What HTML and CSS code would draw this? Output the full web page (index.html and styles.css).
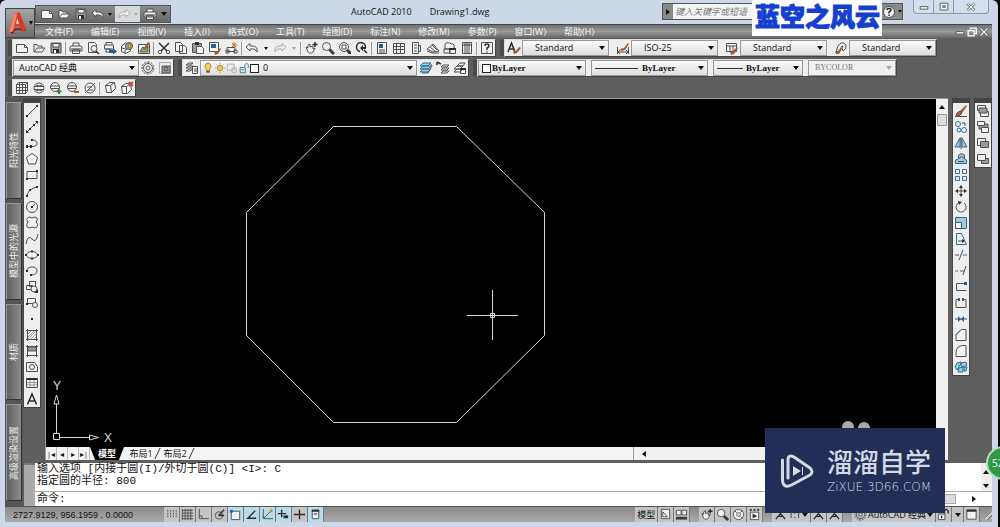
FILE: index.html
```html
<!DOCTYPE html>
<html lang="zh-CN">
<head>
<meta charset="utf-8">
<title>AutoCAD 2010 Drawing1.dwg</title>
<link rel="stylesheet" href="styles.css">
</head>
<body>
<svg class="defs" aria-hidden="true">
  <symbol id="new" viewBox="0 0 14 14"><path class="f" d="M1.500 3.500h8l3 3v5h-11z"/><path d="M9.500 3.500v3h3"/></symbol>
  <symbol id="open" viewBox="0 0 14 14"><path class="f" d="M2 11V3.500h3l1 1.500h4v2M2 11l3-4h8l-3 4z"/></symbol>
  <symbol id="save" viewBox="0 0 14 14"><path class="g" d="M2 2h10v10H2z"/><path class="f" d="M4 2.500h6v3.500H4z"/><path class="k" d="M4 8h6v4H4z"/><path class="w" d="M5 9h2v3H5z"/></symbol>
  <symbol id="print" viewBox="0 0 14 14"><path class="f" d="M4 5V2h6v3M2 5h10l1 1v4H1V6zM3.500 9h7v3.500h-7z"/><path class="k" d="M2 7.500h10v1H2z"/></symbol>
  <symbol id="preview" viewBox="0 0 14 14"><path class="f" d="M2.500 1.500h6l2 2v8h-8z"/><circle class="f" cx="8" cy="7.500" r="3"/><path class="t" d="M10 10l3 3"/></symbol>
  <symbol id="publish" viewBox="0 0 14 14"><path class="f" d="M3 4V1.500h6V4M1.500 4h9v4h-9zM3 8h5v3H3z"/><path class="b" d="M6 9h4V7l4 3.500-4 3V12H6z"/></symbol>
  <symbol id="globe" viewBox="0 0 14 14"><path class="f" d="M1.500 5l4-3 5 2v6l-5 2.500-4-2z"/><circle class="gr" cx="9" cy="5" r="3.500"/><path class="y" d="M8 3l3 1-2 3z"/><path d="M2 7l5 1.500M5 9v3"/></symbol>
  <symbol id="markup" viewBox="0 0 14 14"><path class="f" d="M1.500 3.500h11v9h-11z"/><path class="gr" d="M3 10l3-4 2 2 3-3v6H3z"/><path class="o" d="M6 8l5-7 2 1-5 7z"/></symbol>
  <symbol id="cut" viewBox="0 0 14 14"><path class="t" d="M2 2l8 8M12 2L4 10"/><circle cx="3" cy="11" r="1.700"/><circle cx="11" cy="11" r="1.700"/></symbol>
  <symbol id="copy" viewBox="0 0 14 14"><path class="f" d="M1.500 1.500h5l2 2v7h-7zM5.500 4.500h5l2 2v6h-7z"/></symbol>
  <symbol id="paste" viewBox="0 0 14 14"><path class="g" d="M1.500 2.500h9v9h-9z"/><path class="k" d="M4 1h4v3H4z"/><path class="f" d="M5.500 5.500h5l2 2v5h-7z"/></symbol>
  <symbol id="match" viewBox="0 0 14 14"><path class="f" d="M1.500 1.500h9v9h-9z"/><path class="b" d="M3 3h5v4H3z"/><path class="o" d="M6 10l3 1 3-4 1 1-3 5-3 1z"/></symbol>
  <symbol id="block" viewBox="0 0 14 14"><path class="f" d="M2 10.500V6.500h8v4zM1 9h3v3H1zM9 9h3v3H9z"/><path class="os" d="M9 1v5M7 4h5M7 2l4 4M11 2L7 6"/></symbol>
  <symbol id="undo" viewBox="0 0 14 14"><path class="f" d="M1 6l4-3.500V5c5-.5 8 1.500 7 6-1-2.500-3-3.500-7-3v2z"/></symbol>
  <symbol id="redo" viewBox="0 0 14 14"><path class="l" d="M13 6L9 2.500V5C4 4.500 1 6.500 2 11c1-2.500 3-3.500 7-3v2z"/></symbol>
  <symbol id="pan" viewBox="0 0 14 14"><path class="f" d="M2 6l2 1V4l2-1v3l3-1v3l2-1-2 4c-2 2-4 1-5 0z"/><path class="t" d="M11 1v5M8.500 3.500h5"/></symbol>
  <symbol id="zoom" viewBox="0 0 14 14"><circle class="f" cx="5.500" cy="5.500" r="4"/><path class="tt" d="M8.500 8.500L13 13"/></symbol>
  <symbol id="zoomw" viewBox="0 0 14 14"><circle class="f" cx="6" cy="6" r="4.500"/><path d="M4 4h4v4H4z"/><path class="tt" d="M9 9l3 3"/><path class="k" d="M13 10v3h-3z"/></symbol>
  <symbol id="zoomp" viewBox="0 0 14 14"><path class="t" d="M5 10.500a4.500 4.500 0 1 1 5.500-4M9 9l3 3"/><path class="k" d="M5 7l3-3v2h3v2H8v2z"/></symbol>
  <symbol id="props" viewBox="0 0 14 14"><path class="f" d="M2.500 1.500h9v11h-9z"/><path class="b" d="M4 3h4v4H4z"/><path d="M4 9h6M4 11h6"/></symbol>
  <symbol id="design" viewBox="0 0 14 14"><path class="f" d="M1.500 2.500h11v10h-11z"/><path d="M4.500 3v9M8.500 3v9M2 5.500h10M2 8.500h10"/></symbol>
  <symbol id="palette" viewBox="0 0 14 14"><path class="f" d="M3.500 1.500h6v11h-6zM9.500 4.500h2v6h-2z"/><path d="M5 4h3M5 7h3M5 10h3"/></symbol>
  <symbol id="sheet" viewBox="0 0 14 14"><path class="f" d="M1 8l6-5 6 7-6 1z"/><path d="M1 10l5 2h7M4 6l5 4M6 4l5 5"/></symbol>
  <symbol id="redline" viewBox="0 0 14 14"><path class="f" d="M2 3q1-2 3-1 2-1 3 1 2-1 3 1v4H2zM1 8h6v4H1zM6.500 7.500h6v5h-6z"/><path class="k" d="M6 7h7v2H6z"/></symbol>
  <symbol id="calc" viewBox="0 0 14 14"><path class="f" d="M2.500 1.500h9v11h-9z"/><path class="g" d="M4 3h6v2H4z"/><path d="M4 7h6M4 9h6M4 11h6"/></symbol>
  <symbol id="help" viewBox="0 0 14 14"><path class="f" d="M1.500 1.500h11v11h-11z"/><path class="t" d="M5 5q0-2 2-2t2 2q0 1-2 2v2M7 10.500v1"/></symbol>
  <symbol id="qhelp" viewBox="0 0 14 14"><circle class="f" cx="7" cy="7" r="5.500"/><path class="t" d="M5 5q0-1.500 2-1.500t2 1.500q0 1-2 2v1.500M7 9.500v1.500"/></symbol>
  <symbol id="tstyle" viewBox="0 0 14 14"><path class="t" d="M1 11L4.500 2 8 11M2.500 8h4"/><path class="o" d="M6 10l3 0 3-4 2 1-4 5-3 1z"/></symbol>
  <symbol id="dstyle" viewBox="0 0 14 14"><path d="M1.500 6v7M12.500 6v7M2 11h10M4 9l-2 2 2 2M10 9l2 2-2 2"/><path class="o" d="M4 8l4-1 4-5 1 1-4 6-4 1z"/></symbol>
  <symbol id="tbstyle" viewBox="0 0 14 14"><path class="f" d="M1.500 2.500h10v8h-10z"/><path d="M1.500 5h10M5 5v5M8 5v5"/><path class="o" d="M5 11l3-1 4-4 1 1-4 6-3 1z"/></symbol>
  <symbol id="mlstyle" viewBox="0 0 14 14"><path class="f" d="M2 11L4 5q4-6 8-1 1 4-3 6L8 7q2-3 0-2l-3 5z"/><path class="o" d="M1 11l3 0 3-4 1 1-3 5H2z"/></symbol>
  <symbol id="gear" viewBox="0 0 14 14"><circle cx="7" cy="7" r="4.500"/><circle cx="7" cy="7" r="2"/><path class="dash" d="M7 1a6 6 0 1 1-.1 0"/></symbol>
  <symbol id="wsave" viewBox="0 0 14 14"><path class="l" d="M1.500 1.500h11v11h-11z"/><path class="g" d="M4 5h8v7H4z"/><circle cx="8" cy="8" r="2"/></symbol>
  <symbol id="layers" viewBox="0 0 14 14"><path class="f" d="M1 4l3-2h4L5 4zM1 7l3-2h4L5 7zM1 10l3-2h4l-3 2zM7.500 5.500h5v7h-5z"/><path d="M9 8h3M9 10h3"/></symbol>
  <symbol id="bulb" viewBox="0 0 14 14"><path class="y" d="M7 1a4 4 0 0 1 2 7v2H5V8a4 4 0 0 1 2-7z"/><path class="t" d="M5 11.500h4"/></symbol>
  <symbol id="sun" viewBox="0 0 14 14"><circle class="y" cx="7" cy="7" r="3"/><path class="os" d="M7 1v2M7 11v2M1 7h2M11 7h2M3 3l1 1M10 10l1 1M3 11l1-1M10 4l1-1"/></symbol>
  <symbol id="vp" viewBox="0 0 14 14"><path class="l" d="M1.500 2.500h8v7h-8zM7 7h5v5H7z"/></symbol>
  <symbol id="lock" viewBox="0 0 14 14"><path class="bs" d="M2.500 6.500h6v6h-6zM8 6V3q2-3 4 0v4M4 9h3"/></symbol>
  <symbol id="lay1" viewBox="0 0 14 14"><path class="c" d="M1 11l3-3h8l-3 3zM1 8l3-3h8L9 8zM1 5l3-3h8L9 5z"/><path d="M12 3l1 2-4 7H3"/></symbol>
  <symbol id="lay2" viewBox="0 0 14 14"><path class="f" d="M5 12l2-2h6l-2 2zM5 9l2-2h6l-2 2zM5 6l2-2h6l-2 2z"/><path class="t" d="M1 1l4 2M1 1v3"/></symbol>
  <symbol id="lay3" viewBox="0 0 14 14"><path class="f" d="M1 11l3-3h6l-3 3zM1 8l3-3h6L7 8zM4 5l3-3h5l-2 3zM7.500 7.500h5v5h-5z"/><path class="k" d="M7 7h6v2H7z"/></symbol>
  <symbol id="mesh" viewBox="0 0 14 14"><path class="f" d="M1.500 3.500l2-2h9v9l-2 2h-9z"/><path d="M1.500 3.500h9v9M10.500 3.500l2-2M4.500 2v10M7.500 2v10M2 6.500h10M2 9.500h10"/></symbol>
  <symbol id="sphere" viewBox="0 0 14 14"><circle class="f" cx="7" cy="7" r="5"/><path d="M2 5.500h10M2 8.500h10M4 4q3 2 6 0M4 10q3-2 6 0"/></symbol>
  <symbol id="plus" viewBox="0 0 14 14"><circle class="f" cx="6" cy="6" r="4.500"/><path d="M2 5h8M2 7.500h8"/><path class="grs" d="M10 8v5M7.500 10.500h5"/></symbol>
  <symbol id="minus" viewBox="0 0 14 14"><circle class="f" cx="6" cy="6" r="4.500"/><path d="M2 5h8M2 7.500h8"/><path class="rs" d="M8 11h5"/></symbol>
  <symbol id="slash" viewBox="0 0 14 14"><circle class="f" cx="7" cy="7" r="5"/><path d="M2 12L12 2M4 6h5M5 9h5"/></symbol>
  <symbol id="cube" viewBox="0 0 14 14"><path class="f" d="M2.500 4.500l4-3h5l1 6-4 4h-5z"/><path d="M2.500 4.500h5l4-3M7.500 4.500l1 7"/></symbol>
  <symbol id="cubex" viewBox="0 0 14 14"><path class="f" d="M1.500 5.500l4-3h5l1 6-4 4h-5z"/><path d="M1.500 5.500h5v7M6.500 5.500l4-3"/><path class="rs" d="M9 1l4 4M13 1L9 5"/></symbol>

  <symbol id="line" viewBox="0 0 14 14"><path d="M2 12L12 2"/><path class="k" d="M1 11h2v2H1zM11 1h2v2h-2z"/></symbol>
  <symbol id="xline" viewBox="0 0 14 14"><path d="M1 13L13 1"/><path class="k" d="M1 10v3h3zM10 1h3v3zM4 8h2v2H4zM8 4h2v2H8z"/></symbol>
  <symbol id="pline" viewBox="0 0 14 14"><path d="M2 10.500h7q4-1 3-4t-5-2.500"/><path class="k" d="M1 9h2v3H1zM5 9h2v3H5zM6 3h2v2H6z"/></symbol>
  <symbol id="poly" viewBox="0 0 14 14"><path class="f" d="M7 1.500l5.500 4-2 6.500h-7l-2-6.500z"/></symbol>
  <symbol id="rect" viewBox="0 0 14 14"><path class="f" d="M2 3.500h10v7H2z"/><path class="k" d="M1 10h2v2H1zM11 2h2v2h-2z"/></symbol>
  <symbol id="arc" viewBox="0 0 14 14"><path d="M2 12Q3 5 12 3"/><path class="k" d="M1 11h2v2H1zM4 5h2v2H4zM11 2h2v2h-2z"/></symbol>
  <symbol id="circle" viewBox="0 0 14 14"><circle class="f" cx="7" cy="7" r="5.500"/><path d="M7 7l3-3"/><path class="k" d="M6 6h2v2H6z"/></symbol>
  <symbol id="cloud" viewBox="0 0 14 14"><path class="f" d="M3 6q-3-3 0-4.500 2-1 4 .5 3-2 5 0 1 2-1 4 3 2 1 5-2 2-5 0-3 2-5 0-1-3 1-5z"/></symbol>
  <symbol id="spline" viewBox="0 0 14 14"><path d="M1 12Q3 2 7 7t6-5"/></symbol>
  <symbol id="ellipse" viewBox="0 0 14 14"><ellipse class="f" cx="7" cy="7" rx="5.500" ry="3.500"/><path class="k" d="M6 2.500h2v2H6zM6 9.500h2v2H6zM0 6h2v2H0zM12 6h2v2h-2z"/></symbol>
  <symbol id="earc" viewBox="0 0 14 14"><path d="M2 7q0-4 5-4t5 4-6 4"/><path class="k" d="M1 6h2v2H1zM5 10h2v2H5z"/></symbol>
  <symbol id="insert" viewBox="0 0 14 14"><path class="f" d="M4.500 1.500h6v5h-6zM1.500 5.500h6v4h-6z"/><circle class="f" cx="9" cy="9" r="3"/><path class="k" d="M13 9v4H9z"/></symbol>
  <symbol id="mkblock" viewBox="0 0 14 14"><path class="f" d="M2.500 2.500h8v5h-8z"/><circle class="f" cx="10" cy="9" r="2.500"/><path class="k" d="M1 7h2v2H1z"/></symbol>
  <symbol id="point" viewBox="0 0 14 14"><path class="k" d="M6 6h2v2H6z"/></symbol>
  <symbol id="hatch" viewBox="0 0 14 14"><path class="f" d="M2.500 2.500h9v9h-9z"/><path d="M2.500 1v12M11.500 1v12M1 2.500h12M1 11.500h12"/><path class="thin" d="M3 6l3-3M3 9l6-6M3 11l8-8M6 11l5-5M9 11l2-2"/></symbol>
  <symbol id="grad" viewBox="0 0 14 14"><path class="f" d="M2.500 2.500h9v9h-9z"/><path class="g" d="M3 3h8v4H3z"/><path d="M2.500 1v12M11.500 1v12M1 2.500h12M1 11.500h12"/></symbol>
  <symbol id="region" viewBox="0 0 14 14"><path class="f" d="M1.500 2.500h8l3 4v5h-11z"/><circle class="f" cx="7" cy="7" r="2.500"/></symbol>
  <symbol id="table" viewBox="0 0 14 14"><path class="f" d="M1.500 2.500h11v9h-11z"/><path class="k" d="M1.500 2h11v2h-11z"/><path class="thin" d="M5 4v7M9 4v7M2 6.500h10M2 9h10"/></symbol>
  <symbol id="mtext" viewBox="0 0 14 14"><path class="t" d="M2.500 12.500L7 2l4.500 10.500M4 9h6"/></symbol>

  <symbol id="erase" viewBox="0 0 14 14"><path class="o" d="M5 8l7-7 1 1-5 7z"/><path class="r" d="M3 9l3-2 2 2-3 3H2z"/><path d="M1 12.500h12"/></symbol>
  <symbol id="mcopy" viewBox="0 0 14 14"><circle class="bs" cx="4" cy="4" r="2.500"/><circle class="bs" cx="5" cy="10" r="2"/><circle class="bs" cx="10" cy="10" r="2.500"/><path d="M8 3h3v3"/></symbol>
  <symbol id="mirror" viewBox="0 0 14 14"><path class="c" d="M6 2v9H1zM8 2v9h5z"/><path d="M7 1v12"/></symbol>
  <symbol id="offset" viewBox="0 0 14 14"><path class="c" d="M1.500 11.500V8l3-1V3q3-3 6 0v4l2 1v3.500z"/><path class="f" d="M4 9.500h6M6 7V5h3v2"/></symbol>
  <symbol id="array" viewBox="0 0 14 14"><path class="bs" d="M1.500 1.500h4v4h-4zM8.500 1.500h4v4h-4zM1.500 8.500h4v4h-4zM8.500 8.500h4v4h-4z"/></symbol>
  <symbol id="move" viewBox="0 0 14 14"><path d="M7 3v8M3 7h8"/><path class="k" d="M7 1l2 3H5zM7 13l2-3H5zM1 7l3-2v4zM13 7l-3-2v4z"/></symbol>
  <symbol id="rotate" viewBox="0 0 14 14"><path d="M5 2.500a5 5 0 1 0 5 .5"/><path class="k" d="M4 1l4 1-3 3z"/></symbol>
  <symbol id="scale" viewBox="0 0 14 14"><path class="c" d="M1.500 1.500h11v11h-11z"/><path class="f" d="M1.500 6.500h6v6h-6z"/></symbol>
  <symbol id="stretch" viewBox="0 0 14 14"><path class="bs" d="M2.500 1.500h5l5 11h-10z"/><path d="M4 9h5"/><path class="k" d="M8 7l3 2-3 2z"/></symbol>
  <symbol id="trim" viewBox="0 0 14 14"><path d="M5 12l4-10M1 7h4"/><path class="bs" d="M9 7h4"/></symbol>
  <symbol id="extend" viewBox="0 0 14 14"><path d="M9 11l3-9"/><path class="bs" d="M1 7h3M6 7h4"/></symbol>
  <symbol id="break1" viewBox="0 0 14 14"><path d="M11 3.500H2.500v7h10"/><path class="b" d="M10 2h3v3h-3z"/></symbol>
  <symbol id="break2" viewBox="0 0 14 14"><path d="M4 3.500H2v8h10v-8h-2"/><path class="b" d="M4 2h2v3H4zM8 2h2v3H8z"/></symbol>
  <symbol id="join" viewBox="0 0 14 14"><path d="M1 7h12"/><path class="b" d="M4 4l3 3-3 3zM10 4L7 7l3 3z"/></symbol>
  <symbol id="chamfer" viewBox="0 0 14 14"><path class="f" d="M2 12.500V6.500l5-5h5v11z"/><path class="bs" d="M2 7l5-5"/></symbol>
  <symbol id="fillet" viewBox="0 0 14 14"><path class="f" d="M2 12.500V9q0-7 7-7.500h3v11z"/></symbol>
  <symbol id="explode" viewBox="0 0 14 14"><path class="c" d="M1 7l2-4 4-1-1 3-3 5zM7 3l5-1 1 3-3 2-3-1zM5 8l4-1v5H4zM10 7l3 0-1 4-2 0z"/></symbol>
  <symbol id="front" viewBox="0 0 14 14"><path class="f" d="M1.500 1.500h8v5h-8zM4.500 7.500h8v5h-8z"/><path class="g" d="M3 4h8v5H3z"/></symbol>
  <symbol id="back" viewBox="0 0 14 14"><path class="g" d="M3 4h9v5H3z"/><path class="f" d="M1.500 1.500h7v4h-7zM5.500 7.500h7v5h-7z"/></symbol>
  <symbol id="above" viewBox="0 0 14 14"><path class="f" d="M1.500 2.500h8v7h-8z"/><path class="g" d="M4.500 5.500h8v6h-8z"/></symbol>
  <symbol id="under" viewBox="0 0 14 14"><path class="g" d="M5.500 6.500h7v5h-7z"/><path class="f" d="M1.500 2.500h8v6h-8z"/></symbol>

  <symbol id="snap" viewBox="0 0 14 14"><path class="dash" d="M3 2v9M6 2v9M9 2v9M12 2v9"/></symbol>
  <symbol id="grid" viewBox="0 0 14 14"><path d="M1.500 1v12M4.500 1v12M7.500 1v12M10.500 1v12M1 2.500h12M1 5.500h12M1 8.500h12M1 11.500h12"/></symbol>
  <symbol id="ortho" viewBox="0 0 14 14"><path d="M2.500 1v10.500H13M2.500 8.500h3v3"/></symbol>
  <symbol id="polar" viewBox="0 0 14 14"><circle cx="6.500" cy="8" r="4"/><path class="t" d="M6 8l6-6M6 8h6"/></symbol>
  <symbol id="osnap" viewBox="0 0 14 14"><path class="f" d="M2.500 3.500h9v9h-9z"/><path class="b" d="M1 2h3v3H1z"/></symbol>
  <symbol id="otrack" viewBox="0 0 14 14"><path class="t" d="M11 3L3 11h9"/></symbol>
  <symbol id="ducs" viewBox="0 0 14 14"><path d="M2.500 1v10.500H13M3 11l8-8M2 9l2 2"/><path class="os" d="M11 1v4M9 3h4"/></symbol>
  <symbol id="dyn" viewBox="0 0 14 14"><path class="t" d="M5 2v8M1 6h9"/><path class="k" d="M7 8h5v3H7z"/></symbol>
  <symbol id="lwt" viewBox="0 0 14 14"><path class="t" d="M7 2v10M1 7h12"/></symbol>
  <symbol id="qp" viewBox="0 0 14 14"><path class="f" d="M3.500 2.500h7v9h-7z"/><path class="k" d="M3 2h8v2H3zM5 6h4v1H5z"/></symbol>
  <symbol id="layout" viewBox="0 0 14 14"><path class="f" d="M2.500 1.500h9v10h-9z"/><path d="M4 9.500V4l5 5.500z"/></symbol>
  <symbol id="views" viewBox="0 0 14 14"><path class="f" d="M1.500 2.500h5v5h-5zM7.500 2.500h5v5h-5z"/><path class="tt" d="M1 11h12"/></symbol>
  <symbol id="wheel" viewBox="0 0 14 14"><circle class="f" cx="7" cy="7" r="5.500"/><circle cx="7" cy="7" r="2"/><path d="M3 3l2 2M9 9l2 2M11 3L9 5"/></symbol>
  <symbol id="motion" viewBox="0 0 14 14"><path class="f" d="M2.500 4.500h9v8h-9z"/><path class="k" d="M2 1h2v2H2zM6 1h2v2H6zM10 1h2v2h-2zM5 6l5 3-5 2z"/></symbol>
  <symbol id="scalep" viewBox="0 0 14 14"><path class="t" d="M7 1v5M2 12l5-6 5 6M4 9h6"/></symbol>
  <symbol id="plock" viewBox="0 0 14 14"><path class="f" d="M1.500 6.500h7v6h-7z"/><path class="t" d="M8 6V3q2-3 4 0v3M5 8v3"/></symbol>
  <symbol id="clean" viewBox="0 0 14 14"><path class="f" d="M2 2h10v10H2z"/><path class="k" d="M2 2h10v2H2z"/></symbol>
  <symbol id="min" viewBox="0 0 14 14"><path class="f" d="M2.500 6.500h9v3h-9z"/></symbol>
  <symbol id="max" viewBox="0 0 14 14"><path class="f" d="M2.500 2.500h9v8h-9zM5.500 5.500h3v2h-3z"/></symbol>
  <symbol id="restore" viewBox="0 0 14 14"><path class="ws" d="M5 4V2.500h7V9h-2M2.500 5.500h7v6h-7z"/></symbol>
  <symbol id="close" viewBox="0 0 14 14"><path class="tt" d="M3 3l8 8M11 3l-8 8"/><path class="ws" d="M3 3l8 8M11 3l-8 8"/></symbol>
</svg>

<div class="window">
  <header class="head">
    <button class="app" aria-label="应用程序菜单">
      <svg viewBox="0 0 24 28" width="22" height="26"><path fill="#8b1710" d="M2 25l3-4 14-1 3 3-5 1-3-2-6 1-2 4z"/><path fill="#d93b22" d="M8 2l6-1 8 21-5 2-3-6H9l-3 6-5 2z"/><path fill="#f6836a" d="M8 2l3 1L6 24l-5 2z"/><path fill="#fff" d="M11 8l2 7h-3z"/></svg>
      <i class="caret"></i>
    </button>
    <div class="bars">
      <div class="title">
        <div class="quick">
          <button aria-label="新建"><svg><use href="#new"/></svg></button><button aria-label="打开"><svg><use href="#open"/></svg></button><button aria-label="保存"><svg><use href="#save"/></svg></button><button aria-label="放弃"><svg><use href="#undo"/></svg></button><button class="drop" aria-label="放弃列表"><i class="caret"></i></button><span class="off"><button aria-label="重做" disabled><svg><use href="#redo"/></svg></button><button class="drop" aria-label="重做列表" disabled><i class="caret"></i></button></span><button aria-label="打印"><svg><use href="#print"/></svg></button><button class="drop wider" aria-label="自定义"><i class="caret"></i></button>
        </div>
        <h1><span>AutoCAD 2010</span><span>Drawing1.dwg</span></h1>
        <div class="find"><i class="right"></i><input type="text" placeholder="键入关键字或短语" aria-label="键入关键字或短语"><button aria-label="帮助"><svg><use href="#qhelp"/></svg></button><i class="caret"></i></div>
        <div class="winbtns"><button aria-label="最小化"><svg><use href="#min"/></svg></button><button aria-label="最大化"><svg><use href="#max"/></svg></button><button class="wide" aria-label="关闭"><svg><use href="#close"/></svg></button></div>
      </div>
      <nav class="menu">
        <button>文件(F)</button><button>编辑(E)</button><button>视图(V)</button><button>插入(I)</button><button>格式(O)</button><button>工具(T)</button><button>绘图(D)</button><button>标注(N)</button><button>修改(M)</button><button>参数(P)</button><button>窗口(W)</button><button>帮助(H)</button>
        <div class="docbtns"><button aria-label="最小化文档"><svg><use href="#min"/></svg></button><button aria-label="还原文档"><svg><use href="#restore"/></svg></button><button aria-label="关闭文档"><svg><use href="#close"/></svg></button></div>
      </nav>
    </div>
  </header>

  <div class="row">
    <div class="bar">
      <button aria-label="新建"><svg><use href="#new"/></svg></button><button aria-label="打开"><svg><use href="#open"/></svg></button><button aria-label="保存"><svg><use href="#save"/></svg></button><hr>
      <button aria-label="打印"><svg><use href="#print"/></svg></button><button aria-label="打印预览"><svg><use href="#preview"/></svg></button><button aria-label="发布"><svg><use href="#publish"/></svg></button><button aria-label="三维 DWF"><svg><use href="#globe"/></svg></button><button aria-label="标记"><svg><use href="#markup"/></svg></button><hr>
      <button aria-label="剪切"><svg><use href="#cut"/></svg></button><button aria-label="复制"><svg><use href="#copy"/></svg></button><button aria-label="粘贴"><svg><use href="#paste"/></svg></button><button aria-label="特性匹配"><svg><use href="#match"/></svg></button><button aria-label="块编辑器"><svg><use href="#block"/></svg></button><hr>
      <button aria-label="放弃"><svg><use href="#undo"/></svg></button><button class="drop" aria-label="放弃列表"><i class="caret"></i></button><button aria-label="重做" disabled><svg><use href="#redo"/></svg></button><button class="drop" aria-label="重做列表" disabled><i class="caret pale"></i></button><hr>
      <button aria-label="平移"><svg><use href="#pan"/></svg></button><button aria-label="缩放"><svg><use href="#zoom"/></svg></button><button aria-label="窗口缩放"><svg><use href="#zoomw"/></svg></button><button aria-label="上一个"><svg><use href="#zoomp"/></svg></button><hr>
      <button aria-label="特性"><svg><use href="#props"/></svg></button><button aria-label="设计中心"><svg><use href="#design"/></svg></button><button aria-label="工具选项板"><svg><use href="#palette"/></svg></button><button aria-label="图纸集"><svg><use href="#sheet"/></svg></button><button aria-label="标记集"><svg><use href="#redline"/></svg></button><button aria-label="计算器"><svg><use href="#calc"/></svg></button><hr>
      <button aria-label="帮助"><svg><use href="#help"/></svg></button>
    </div>
    <div class="bar styles">
      <button aria-label="文字样式"><svg><use href="#tstyle"/></svg></button><label class="combo"><select aria-label="文字样式"><option>Standard</option></select></label>
      <button aria-label="标注样式"><svg><use href="#dstyle"/></svg></button><label class="combo"><select aria-label="标注样式"><option>ISO-25</option></select></label>
      <button aria-label="表格样式"><svg><use href="#tbstyle"/></svg></button><label class="combo"><select aria-label="表格样式"><option>Standard</option></select></label>
      <button aria-label="多重引线样式"><svg><use href="#mlstyle"/></svg></button><label class="combo"><select aria-label="多重引线样式"><option>Standard</option></select></label>
    </div>
  </div>

  <div class="row">
    <div class="bar"><label class="combo space"><select aria-label="工作空间"><option>AutoCAD 经典</option></select></label><button aria-label="工作空间设置"><svg><use href="#gear"/></svg></button><button aria-label="保存工作空间"><svg><use href="#wsave"/></svg></button></div>
    <div class="bar"><button aria-label="图层特性"><svg><use href="#layers"/></svg></button><label class="combo layer"><span class="marks"><svg><use href="#bulb"/></svg><svg><use href="#sun"/></svg><svg><use href="#vp"/></svg><svg><use href="#lock"/></svg><i class="swatch"></i></span><select aria-label="图层"><option>0</option></select></label><button aria-label="置为当前"><svg><use href="#lay1"/></svg></button><button aria-label="上一个图层"><svg><use href="#lay2"/></svg></button><button aria-label="图层状态"><svg><use href="#lay3"/></svg></button></div>
    <div class="bar by"><label class="combo color"><span class="marks"><i class="swatch"></i></span><select aria-label="颜色"><option>ByLayer</option></select></label><label class="combo ltype"><span class="marks"><i class="rule"></i></span><select aria-label="线型"><option>ByLayer</option></select></label><label class="combo lweight"><span class="marks"><i class="rule"></i></span><select aria-label="线宽"><option>ByLayer</option></select></label><label class="combo plot"><select aria-label="打印样式" disabled><option>BYCOLOR</option></select></label></div>
  </div>

  <div class="row">
    <div class="bar"><button aria-label="网格长方体"><svg><use href="#mesh"/></svg></button><button aria-label="平滑对象"><svg><use href="#sphere"/></svg></button><button aria-label="提高平滑度"><svg><use href="#plus"/></svg></button><button aria-label="降低平滑度"><svg><use href="#minus"/></svg></button><button aria-label="优化网格"><svg><use href="#slash"/></svg></button><hr><button aria-label="锐化"><svg><use href="#cube"/></svg></button><button aria-label="取消锐化"><svg><use href="#cubex"/></svg></button></div>
  </div>

  <main class="body">
    <aside class="palettes"><button><span>阳光特性</span></button><button><span>模型中的光源</span></button><button><span>材质</span></button><button><span>高级渲染设置</span></button></aside>
    <div class="center">
      <div class="work">
        <div class="vbar"><button aria-label="直线"><svg><use href="#line"/></svg></button><button aria-label="构造线"><svg><use href="#xline"/></svg></button><button aria-label="多段线"><svg><use href="#pline"/></svg></button><button aria-label="正多边形"><svg><use href="#poly"/></svg></button><button aria-label="矩形"><svg><use href="#rect"/></svg></button><button aria-label="圆弧"><svg><use href="#arc"/></svg></button><button aria-label="圆"><svg><use href="#circle"/></svg></button><button aria-label="修订云线"><svg><use href="#cloud"/></svg></button><button aria-label="样条曲线"><svg><use href="#spline"/></svg></button><button aria-label="椭圆"><svg><use href="#ellipse"/></svg></button><button aria-label="椭圆弧"><svg><use href="#earc"/></svg></button><button aria-label="插入块"><svg><use href="#insert"/></svg></button><button aria-label="创建块"><svg><use href="#mkblock"/></svg></button><button aria-label="点"><svg><use href="#point"/></svg></button><button aria-label="图案填充"><svg><use href="#hatch"/></svg></button><button aria-label="渐变色"><svg><use href="#grad"/></svg></button><button aria-label="面域"><svg><use href="#region"/></svg></button><button aria-label="表格"><svg><use href="#table"/></svg></button><button aria-label="多行文字"><svg><use href="#mtext"/></svg></button></div>
        <section class="view">
          <div class="stage">
            <svg class="drawing" width="889" height="348" role="img" aria-label="正八边形">
              <path class="shape" d="M287.500 27.500h123l88 86v123l-88 87h-123l-87-87v-123z"/>
              <path class="cross" d="M421 216.500h51M446.500 191v50"/><path class="pick" d="M444.500 214.500h4v4h-4z"/>
              <path class="ucs" d="M7.500 334.500h6v6h-6zM14 338.500h29M10.500 334v-29M43.500 336v5l9-2.500zM8 305h5l-2.500-9z"/>
              <text x="7" y="291">Y</text><text x="58" y="343">X</text>
              <circle cx="802" cy="328" r="6"/><circle cx="818" cy="329" r="6"/>
            </svg>
            <div class="vscroll"><i class="up"></i><i class="thumb"></i></div>
          </div>
          <div class="sheets">
            <div class="steps"><button aria-label="第一个">|◂</button><button aria-label="上一个">◂</button><button aria-label="下一个">▸</button><button aria-label="最后">▸|</button></div>
            <button class="tab active">模型</button><button class="tab">布局1</button><button class="tab">布局2</button>
            <div class="hscroll"><i class="left"></i></div>
          </div>
        </section>
        <div class="vbar"><button aria-label="删除"><svg><use href="#erase"/></svg></button><button aria-label="复制"><svg><use href="#mcopy"/></svg></button><button aria-label="镜像"><svg><use href="#mirror"/></svg></button><button aria-label="偏移"><svg><use href="#offset"/></svg></button><button aria-label="阵列"><svg><use href="#array"/></svg></button><button aria-label="移动"><svg><use href="#move"/></svg></button><button aria-label="旋转"><svg><use href="#rotate"/></svg></button><button aria-label="缩放"><svg><use href="#scale"/></svg></button><button aria-label="拉伸"><svg><use href="#stretch"/></svg></button><button aria-label="修剪"><svg><use href="#trim"/></svg></button><button aria-label="延伸"><svg><use href="#extend"/></svg></button><button aria-label="打断于点"><svg><use href="#break1"/></svg></button><button aria-label="打断"><svg><use href="#break2"/></svg></button><button aria-label="合并"><svg><use href="#join"/></svg></button><button aria-label="倒角"><svg><use href="#chamfer"/></svg></button><button aria-label="圆角"><svg><use href="#fillet"/></svg></button><button aria-label="分解"><svg><use href="#explode"/></svg></button></div>
        <div class="vbar last"><button aria-label="前置"><svg><use href="#front"/></svg></button><button aria-label="后置"><svg><use href="#back"/></svg></button><button aria-label="置于对象之上"><svg><use href="#above"/></svg></button><button aria-label="置于对象之下"><svg><use href="#under"/></svg></button></div>
      </div>
      <section class="command">
        <i class="grip"></i>
        <div class="console">
          <div class="log"><p>输入选项 [内接于圆(I)/外切于圆(C)] &lt;I&gt;: C</p><p>指定圆的半径: 800</p><span class="updown"><i class="up"></i><i class="caret"></i></span></div>
          <div class="prompt"><label for="cmd">命令:</label><input id="cmd" type="text"><i class="hthumb"></i><i class="right"></i></div>
        </div>
      </section>
    </div>
  </main>

  <footer class="status">
    <output class="coords">2727.9129, 956.1959 , 0.0000</output>
    <div class="group"><button aria-label="捕捉"><svg><use href="#snap"/></svg></button><button aria-label="栅格"><svg><use href="#grid"/></svg></button><button aria-label="正交"><svg><use href="#ortho"/></svg></button><button aria-label="极轴"><svg><use href="#polar"/></svg></button><button class="on" aria-label="对象捕捉"><svg><use href="#osnap"/></svg></button><button class="on" aria-label="对象追踪"><svg><use href="#otrack"/></svg></button><button class="on" aria-label="动态 UCS"><svg><use href="#ducs"/></svg></button><button class="on" aria-label="动态输入"><svg><use href="#dyn"/></svg></button><button aria-label="线宽"><svg><use href="#lwt"/></svg></button><button class="on" aria-label="快捷特性"><svg><use href="#qp"/></svg></button></div>
    <div class="group tail"><button class="word">模型</button><button aria-label="快速查看布局"><svg><use href="#layout"/></svg></button><button aria-label="快速查看图形"><svg><use href="#views"/></svg></button></div>
    <div class="group"><button aria-label="平移"><svg><use href="#pan"/></svg></button><button aria-label="缩放"><svg><use href="#zoom"/></svg></button><button aria-label="控制盘"><svg><use href="#wheel"/></svg></button><button aria-label="运动"><svg><use href="#motion"/></svg></button></div>
    <div class="group"><button class="word"><svg><use href="#scalep"/></svg>1:1 <i class="caret"></i></button><button aria-label="注释可见性"><svg><use href="#scalep"/></svg></button><button aria-label="自动缩放"><svg><use href="#scalep"/></svg></button></div>
    <div class="group"><button class="word"><svg><use href="#gear"/></svg>AutoCAD 经典 <i class="caret"></i></button><button aria-label="锁定"><svg><use href="#plock"/></svg></button><button class="drop" aria-label="状态栏菜单"><i class="caret"></i></button><button aria-label="全屏显示"><svg><use href="#clean"/></svg></button></div>
    <i class="sizer"></i>
  </footer>

  <div class="author">蓝空之风云</div>
  <div class="brand">
    <svg viewBox="0 0 36 38" width="36" height="38"><path d="M3.500 8v19q0 10 9 6L31 23q4-3 0-7L15 5q-6-3-6 3v18"/><path class="play" d="M14 14l8 5-8 5zM23 15h1v8h-1z"/></svg>
    <div><strong>溜溜自学</strong><span>ZiXUE.3D66.COM</span></div>
  </div>
  <div class="badge">52</div>
</div>
</body>
</html>
```
FILE: styles.css
```css
* { box-sizing: border-box; }
body { margin: 0; height: 100vh; overflow: hidden; background: #000; font-family: "Open Sans", "Noto Sans CJK SC", sans-serif; font-size: 9px; color: #111; }
button { display: flex; flex: none; align-items: center; justify-content: center; margin: 0; padding: 0; border: 0; background: none; font: inherit; color: inherit; }
h1, p, hr { margin: 0; }
input, select { font: inherit; color: inherit; border: 0; border-radius: 0; outline: 0; }

.defs { position: absolute; width: 0; height: 0; }
svg { flex: none; fill: none; stroke: #505050; stroke-width: 1; }
button > svg, .marks svg { width: 14px; height: 14px; }
.f { fill: #f2f2f2; }
.w { fill: #fff; stroke: none; }
.g { fill: #9a9a9a; }
.k { fill: #2c2c2c; stroke: none; }
.l { fill: #eee; stroke: #aaa; }
.t { stroke: #2c2c2c; stroke-width: 1.5; }
.tt { stroke: #3c3c3c; stroke-width: 3; }
.ws { stroke: #fff; stroke-width: 1.5; }
.b { fill: #245f96; stroke: none; }
.bs { stroke: #2c739c; }
.c { fill: #9ccbe2; stroke: #2b6a8f; }
.gr { fill: #8fa873; }
.grs { stroke: #2d8a35; stroke-width: 2; }
.y { fill: #f6cf5c; stroke: #a6792a; }
.o { fill: #a55a2c; stroke: none; }
.os { stroke: #c98420; }
.r { fill: #c9533c; }
.rs { stroke: #c2542e; stroke-width: 2; }
.dash { stroke-dasharray: 2 1; }
.thin { stroke: #999; }

.caret, .up, .left, .right { flex: none; width: 0; height: 0; border: 3px solid transparent; }
.caret { border-top: 4px solid #111; border-bottom: 0; }
.up { border-bottom: 4px solid #111; border-top: 0; }
.left { border-right: 4px solid #111; border-left: 0; }
.right { border-left: 4px solid #111; border-right: 0; }
.pale { border-top-color: #aaa; }

.window { position: relative; display: flex; flex-direction: column; height: 100%; margin-right: 2px; padding: 0 6px 5px 5px; border-radius: 6px 6px 0 0; background: #ccd8e8; overflow: clip; overflow-clip-margin: 4px; }

.head { display: flex; }
.app { align-self: flex-end; gap: 1px; width: 30px; height: 30px; border: 1px solid #444; background: linear-gradient(#a5a5a5, #6f6f6f); }
.app svg { width: 20px; height: 26px; stroke: none; }
.app .caret { border-width: 4px 2px 0; }
.bars { flex: 1; min-width: 0; }
.title { position: relative; display: flex; height: 24px; }
.quick { display: flex; align-items: center; gap: 3px; height: 18px; margin-top: 5px; padding: 0 2px 0 4px; border: 1px solid #555; background: linear-gradient(#8d8d8d, #686868); }
.quick .drop { width: 4px; }
.quick .wider { width: 8px; }
.quick .caret { border-width: 3px 2px 0; }
.quick .wider .caret { border-width: 4px 3px 0; }
.off { display: flex; gap: 3px; height: 16px; padding: 0 2px; background: #d7dadd; }
.off .caret { border-top-color: #aaa; }
.title h1 { display: flex; gap: 18px; position: absolute; left: 316px; top: 0; font-size: 9px; font-weight: 400; line-height: 24px; }
.find { display: flex; align-items: center; gap: 2px; position: absolute; right: 89px; top: 3px; width: 241px; height: 17px; padding-left: 3px; border: 1px solid #555; background: #8a8a8a; }
.find input { flex: 1; min-width: 0; height: 15px; margin-left: 1px; background: #f4f4f4; font-style: italic; }
.find input::placeholder { color: #777; }
.find .caret { border-width: 3px 2px 0; }
.winbtns { display: flex; position: absolute; top: 0; right: 3px; height: 14px; border: 1px solid #8d9aae; border-top: 0; border-radius: 0 0 4px 4px; background: #d5dfec; }
.winbtns button { width: 20px; border-right: 1px solid #8d9aae; }
.winbtns .wide { width: 34px; border: 0; }
.winbtns svg { width: 12px; height: 12px; }
.menu { display: flex; align-items: center; gap: 18px; height: 14px; padding-left: 10px; border-top: 1px solid #444; background: linear-gradient(#707070, #999 50%, #666); color: #f5f5f5; line-height: 13px; }
.docbtns { display: flex; margin-left: auto; padding-right: 2px; }
.docbtns svg { width: 12px; height: 12px; }

.row { display: flex; gap: 8px; height: 20px; padding: 1px 0 1px 7px; background: #5e5e5e; }
.bar { display: flex; align-items: center; height: 18px; background: #eee; border: 1px solid #ddd; border-right-color: #444; border-bottom-color: #444; box-shadow: -5px 0 0 -1px #4b4b4b; }
.bar button { width: 17px; height: 16px; }
.bar .drop { width: 11px; }
.bar .drop .caret { border-width: 3px 2px 0; }
hr { width: 1px; height: 13px; margin: 0 1px; border: 0; background: #999; }
.combo { display: flex; position: relative; height: 16px; background: linear-gradient(#fafafa, #dedede); border: 1px solid #999; }
.combo::after { content: ""; position: absolute; right: 3px; top: 5px; border: 3px solid transparent; border-top: 4px solid #111; border-bottom: 0; }
.combo select { appearance: none; width: 100%; height: 14px; padding: 0; background: none; line-height: 14px; }
.marks { display: flex; align-items: center; position: absolute; left: 1px; top: 0; height: 14px; pointer-events: none; }
.marks svg { width: 12px; height: 12px; }
.swatch { width: 9px; height: 9px; border: 1px solid #222; background: #fff; }
.rule { width: 43px; height: 1px; background: #333; }
.styles .combo { width: 87px; margin-right: 5px; }
.styles .combo:last-child { margin-right: 0; }
.styles .combo select { padding-left: 12px; }
.space { width: 126px; }
.space select { padding-left: 5px; }
.layer { width: 217px; }
.layer select { padding-left: 62px; }
.by { gap: 5px; font-family: "Liberation Serif", serif; font-weight: 700; }
.color { width: 108px; }
.color .marks { left: 3px; }
.color select { padding-left: 13px; }
.ltype { width: 117px; }
.ltype .marks, .lweight .marks { left: 3px; }
.ltype select { padding-left: 50px; }
.lweight { width: 90px; }
.lweight .rule { width: 26px; }
.lweight select { padding-left: 32px; }
.plot { width: 88px; font-size: 8px; font-weight: 400; background: #f0f0f0; }
.plot select { padding-left: 6px; opacity: 1; color: #777; }
.plot::after { border-top-color: #aaa; }

.body { display: flex; flex: 1; min-height: 0; background: #5e5e5e; }
.palettes { display: flex; flex-direction: column; gap: 4px; width: 18px; padding: 4px 1px 5px 1px; background: #555; }
.palettes button { flex: 1; min-height: 0; border: 1px solid #333; border-left-color: #999; border-top-color: #999; background: linear-gradient(90deg, #606060, #8b8b8b); color: #eee; line-height: 12px; }
.palettes span { writing-mode: vertical-rl; text-orientation: sideways; transform: rotate(180deg); white-space: nowrap; }
.center { display: flex; flex-direction: column; flex: 1; min-width: 0; }
.work { display: flex; flex: 1; min-height: 0; gap: 4px; }
.vbar { align-self: flex-start; width: 18px; border: 1px solid #444; border-top: 5px solid #444; background: #eee; }
.vbar button { width: 16px; height: 16px; }
.view { display: flex; flex-direction: column; flex: 1; min-width: 0; border-left: 1px solid #999; border-top: 1px solid #999; }
.stage { display: flex; flex: 1; min-height: 0; background: #000; overflow: hidden; }
.drawing { display: block; }
.shape, .cross, .pick, .ucs { stroke: #d8d8d8; }
.drawing text { fill: #ddd; stroke: none; font: 12px "Liberation Sans", sans-serif; }
.drawing circle { fill: #aaa; stroke: none; }
.vscroll { display: flex; flex-direction: column; align-items: center; gap: 5px; width: 12px; margin-left: auto; padding-top: 6px; background: #f1f1f1; }
.thumb { width: 10px; height: 12px; border: 1px solid #999; border-radius: 1px; background: #ddd; }
.sheets { display: flex; height: 13px; background: #f4f4f4; line-height: 12px; }
.steps { display: flex; }
.steps button { width: 11px; border-right: 1px solid #bbb; font-size: 8px; }
.tab { position: relative; width: 34px; }
.tab::after { content: ""; position: absolute; right: 0; top: 1px; width: 1px; height: 11px; background: #333; transform: skewX(-25deg); }
.active { background: #000; color: #fff; font-weight: 700; clip-path: polygon(0 0, 100% 0, 85% 100%, 15% 100%); }
.hscroll { display: flex; align-items: center; width: 315px; margin-left: auto; padding-left: 8px; border-left: 1px solid #999; background: #f1f1f1; }

.command { display: flex; height: 46px; padding: 3px 0 0 1px; }
.grip { width: 11px; border-top: 2px solid #777; background: #aaa; }
.console { flex: 1; min-width: 0; background: #fff; font-family: "Liberation Mono", "Noto Sans CJK SC", monospace; font-size: 11px; }
.log { position: relative; height: 29px; padding-left: 2px; border-bottom: 1px solid #aaa; line-height: 12px; }
.log p { white-space: pre; }
.updown { display: flex; flex-direction: column; justify-content: space-between; position: absolute; right: 0; top: 0; width: 11px; height: 28px; padding: 7px 2px 3px; background: #eee; }
.prompt { display: flex; align-items: center; height: 14px; padding-left: 2px; line-height: 14px; }
.prompt input { flex: 1; min-width: 0; height: 13px; padding: 0 4px; }
.prompt .right { margin: 0 16px; }
.hthumb { width: 60px; height: 10px; border: 1px solid #aaa; background: #ddd; }

.status { display: flex; align-items: center; gap: 9px; height: 16px; border-top: 1px solid #555; background: linear-gradient(#8a8a8a, #aaa); }
.coords { width: 150px; padding-left: 8px; font: 9px "Liberation Sans", sans-serif; white-space: nowrap; }
.group { display: flex; height: 15px; }
.group button { width: 16px; height: 15px; border-right: 1px solid #777; background: #c5c5c5; }
.group svg { width: 13px; height: 13px; }
.group .on { background: #b9dced; }
.group .word { width: auto; gap: 1px; padding: 0 2px; }
.group .drop { width: 12px; }
.tail { margin-left: auto; }
.sizer { width: 8px; height: 10px; margin-left: -5px; background: repeating-linear-gradient(135deg, #777 0 1px, #ccc 1px 3px); clip-path: polygon(100% 0, 100% 100%, 0 100%); }

.author { position: absolute; right: 116px; top: 0; height: 36px; padding: 0 2px 0 3px; background: #fff; color: #1540cf; font-family: "Noto Sans CJK SC", sans-serif; font-size: 25px; font-weight: 900; line-height: 30px; -webkit-text-stroke: 1px #1540cf; }
.brand { display: flex; align-items: center; gap: 12px; position: absolute; right: 53px; bottom: 14px; width: 180px; height: 85px; padding-left: 14px; background: #222e56; color: #d5d9e4; }
.brand svg { stroke: #d5d9e4; stroke-width: 3; stroke-linecap: round; stroke-linejoin: round; }
.brand .play { fill: #d5d9e4; stroke: none; }
.brand div { display: flex; flex-direction: column; padding-bottom: 4px; }
.brand strong { font-size: 26px; font-weight: 500; line-height: 36px; }
.brand span { font-family: "DejaVu Sans", sans-serif; font-size: 12px; font-weight: 200; line-height: 14px; }
.badge { position: absolute; right: -22px; top: 446px; width: 34px; height: 34px; padding-left: 4px; border: 2px solid #b8d9bd; border-radius: 50%; background: #2d9a46; color: #fff; font-size: 10px; line-height: 30px; }
```
